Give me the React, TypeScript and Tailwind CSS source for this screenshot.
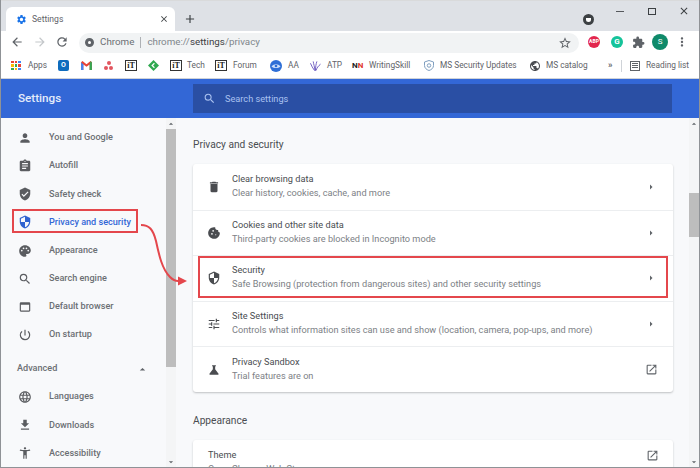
import type { ReactNode } from "react";
import {
  MdAccessibilityNew,
  MdAdd,
  MdArrowBack,
  MdArrowDropDown,
  MdArrowDropUp,
  MdArrowForward,
  MdArrowRight,
  MdAssignment,
  MdClose,
  MdCookie,
  MdDelete,
  MdExtension,
  MdFileDownload,
  MdLanguage,
  MdMoreVert,
  MdOpenInNew,
  MdPalette,
  MdPerson,
  MdPowerSettingsNew,
  MdPublic,
  MdRefresh,
  MdScience,
  MdSearch,
  MdSecurity,
  MdSettings,
  MdStarBorder,
  MdTune,
  MdVerifiedUser,
  MdWebAsset,
} from "react-icons/md";

const sideItems = [
  { label: "You and Google", icon: <MdPerson /> },
  { label: "Autofill", icon: <MdAssignment /> },
  { label: "Safety check", icon: <MdVerifiedUser /> },
  { label: "Privacy and security", icon: <MdSecurity />, active: true },
  { label: "Appearance", icon: <MdPalette /> },
  { label: "Search engine", icon: <MdSearch /> },
  { label: "Default browser", icon: <MdWebAsset /> },
  { label: "On startup", icon: <MdPowerSettingsNew /> },
];

const advancedItems = [
  { label: "Languages", icon: <MdLanguage /> },
  { label: "Downloads", icon: <MdFileDownload /> },
  { label: "Accessibility", icon: <MdAccessibilityNew /> },
];

const rows = [
  { title: "Clear browsing data", sub: "Clear history, cookies, cache, and more", icon: <MdDelete /> },
  { title: "Cookies and other site data", sub: "Third-party cookies are blocked in Incognito mode", icon: <MdCookie /> },
  { title: "Security", sub: "Safe Browsing (protection from dangerous sites) and other security settings", icon: <MdSecurity /> },
  { title: "Site Settings", sub: "Controls what information sites can use and show (location, camera, pop-ups, and more)", icon: <MdTune /> },
  { title: "Privacy Sandbox", sub: "Trial features are on", icon: <MdScience />, external: true },
];

const IT = () => (
  <span className="w-[12px] h-[11px] shrink-0 border border-[#333] flex items-center justify-center text-[8px] leading-none font-bold text-[#222] font-['Liberation_Serif',serif]">
    iT
  </span>
);

const Label = ({ children, className }: { children: ReactNode; className: string }) => (
  <span className={`text-[8.3px] text-[#5f6368] whitespace-nowrap shrink-0 ${className}`}>{children}</span>
);

const Bookmarks = () => (
  <div className="h-[26px] bg-white flex items-center pl-[10px] border-b border-[#cfd3d8]">
    <span className="grid grid-cols-3 gap-[1px] w-[10px] shrink-0">
      {["bg-[#ea4335]", "bg-[#ea4335]", "bg-[#4285f4]", "bg-[#fbbc05]", "bg-[#34a853]", "bg-[#ea4335]", "bg-[#34a853]", "bg-[#fbbc05]", "bg-[#4285f4]"].map((c, i) => (
        <span key={i} className={`h-[2.3px] ${c}`} />
      ))}
    </span>
    <Label className="ml-[7px] w-[18px]">Apps</Label>
    <span className="ml-[12px] w-[11px] h-[11px] shrink-0 rounded-[2px] bg-[#0f6cbd] text-white text-[7px] font-bold flex items-center justify-center">O</span>
    <svg viewBox="0 0 12 10" className="ml-[12px] w-[11px] h-[9px] shrink-0">
      <path d="M0 1.5V10h2.5V4L6 6.5 9.5 4v6H12V1.5L10.500 0 6 3.500 1.500 0z" fill="#ea4335" />
      <path d="M9.500 4v6H12V1.500L10.500 0z" fill="#34a853" />
      <path d="M0 1.500V10h2.500V4z" fill="#4285f4" />
    </svg>
    <span className="ml-[12px] relative w-[9px] h-[9px] shrink-0">
      <span className="absolute left-[2.5px] top-0 w-[4px] h-[4px] rounded-full bg-[#e2555f]" />
      <span className="absolute left-0 top-[5px] w-[4px] h-[4px] rounded-full bg-[#e2555f]" />
      <span className="absolute left-[5px] top-[5px] w-[4px] h-[4px] rounded-full bg-[#e2555f]" />
    </span>
    <span className="ml-[12px] shrink-0"><IT /></span>
    <svg viewBox="0 0 12 12" className="ml-[11px] w-[11px] h-[11px] shrink-0">
      <path d="M6 0l6 6-6 6-6-6z" fill="#2fa84f" />
      <path d="M7 3.500 4.500 6 7 8.500" fill="none" stroke="#fff" strokeWidth="1.300" />
    </svg>
    <span className="ml-[11px] shrink-0"><IT /></span>
    <Label className="ml-[5px] w-[17px]">Tech</Label>
    <span className="ml-[11px] shrink-0"><IT /></span>
    <Label className="ml-[6px] w-[23px]">Forum</Label>
    <svg viewBox="0 0 12 12" className="ml-[14px] w-[12px] h-[12px] shrink-0">
      <circle cx="6" cy="6" r="6" fill="#2f6fd6" />
      <path d="M1.500 6.500C4 3.500 8 3.500 10.500 6.500 8 8.500 4 8.500 1.500 6.500z" fill="#cfe0fa" />
      <circle cx="6" cy="6" r="1.300" fill="#2f6fd6" />
    </svg>
    <Label className="ml-[6px] w-[10px]">AA</Label>
    <svg viewBox="0 0 12 12" className="ml-[12px] w-[11px] h-[12px] shrink-0" fill="none" stroke="#5b47b8" strokeWidth="0.900">
      <path d="M5 11C3 8 1.500 6 .5 3M5.500 11C5 7 4 4 3.500 1M6 11c0-4 .5-7 1.500-10M6.500 11c1-3 2.500-5 5-7" />
    </svg>
    <Label className="ml-[6px] w-[14px]">ATP</Label>
    <span className="ml-[11px] text-[8px] font-bold leading-none whitespace-nowrap w-[11px] shrink-0">
      <span className="text-[#222]">N</span><span className="text-[#e0352b]">N</span>
    </span>
    <Label className="ml-[6px] w-[42px]">WritingSkill</Label>
    <svg viewBox="0 0 24 24" className="ml-[12px] w-[12px] h-[13px] shrink-0" fill="none" stroke="#7f9fc0" strokeWidth="2">
      <path d="M12 2 3 5v7c0 5 4 8.500 9 10 5-1.500 9-5 9-10V5z" />
      <circle cx="12" cy="12" r="3.500" />
    </svg>
    <Label className="ml-[5px] w-[77px]">MS Security Updates</Label>
    <MdPublic className="ml-[12px] text-[12px] text-[#4a4c50] shrink-0" />
    <Label className="ml-[5px] w-[41px]">MS catalog</Label>
    <span className="ml-[21px] w-[5px] text-[9px] font-bold text-[#5f6368] leading-none shrink-0">»</span>
    <span className="ml-[8px] w-px h-[12px] bg-[#cfd3d8] shrink-0" />
    <span className="ml-[8px] w-[10px] h-[10px] border border-[#5f6368] flex flex-col justify-evenly pl-[1px] shrink-0">
      <span className="w-[6px] h-px bg-[#5f6368]" />
      <span className="w-[6px] h-px bg-[#5f6368]" />
      <span className="w-[6px] h-px bg-[#5f6368]" />
    </span>
    <Label className="ml-[6px] w-[43px]">Reading list</Label>
  </div>
);

const Scrollbar = ({ thumbTop, thumbH }: { thumbTop: string; thumbH: string }) => (
  <div className="w-[10px] bg-[#f4f5f6] flex flex-col items-stretch shrink-0">
    <div className="h-[11px] flex items-center justify-center text-[10px] text-[#5f6368]"><MdArrowDropUp /></div>
    <div className={`bg-[#bdbdbd] ${thumbTop} ${thumbH}`} />
    <div className="flex-1" />
    <div className="h-[11px] flex items-center justify-center text-[10px] text-[#5f6368]"><MdArrowDropDown /></div>
  </div>
);

const SideRow = ({ label, icon, active }: { label: string; icon: ReactNode; active?: boolean }) => (
  <div className="h-[28.15px] flex items-center">
    <span className={`w-[48px] shrink-0 flex justify-center text-[14px] ${active ? "text-[#2f63d0]" : "text-[#5a5c60]"}`}>{icon}</span>
    <span className={`text-[9.1px] font-medium ${active ? "text-[#3367d6]" : "text-[#6b6f73]"}`}>{label}</span>
  </div>
);

export default function App() {
  return (
    <div className="relative w-[700px] h-[468px] overflow-hidden flex flex-col bg-[#d9dadb] border-l border-r border-b border-[#8f9296] font-['Roboto',sans-serif]">
      {/* Tabs */}
      <div className="h-[30px] mt-[1px] bg-[#dee1e6] flex items-end pl-[5px] relative">
        <div className="w-[169px] h-[24px] bg-white rounded-t-[6px] flex items-center pl-[10px] pr-[6px]">
          <MdSettings className="text-[#1a73e8] text-[11px]" />
          <span className="ml-[5px] text-[8.6px] text-[#5f6368]">Settings</span>
          <MdClose className="ml-auto text-[#3c4043] text-[10px]" />
        </div>
        <MdAdd className="ml-[8px] mb-[5px] text-[14px] text-[#3c4043]" />
        <div className="ml-auto mb-[6px] mr-[105px] w-[11px] h-[11px] rounded-full bg-[#3c4043] flex items-center justify-center">
          <span className="w-[5px] h-[4px] bg-white rounded-b-full" />
        </div>
        <div className="absolute right-[9px] top-[4px] flex items-center gap-[24px] text-[#3c4043]">
          <span className="w-[8px] h-px bg-[#55585c]" />
          <span className="w-[8px] h-[7px] border border-[#3c4043]" />
          <MdClose className="text-[12px] -ml-[2px]" />
        </div>
      </div>

      {/* Toolbar */}
      <div className="h-[22px] bg-white flex items-center pl-[9px] pr-[8px]">
        <MdArrowBack className="text-[14px] text-[#5f6368]" />
        <MdArrowForward className="ml-[9px] text-[14px] text-[#c4c7ca]" />
        <MdRefresh className="ml-[8px] text-[14px] text-[#5f6368]" />
        <div className="ml-[10px] w-[500px] h-[20px] mt-[1px] rounded-full bg-[#f1f3f4] flex items-center pl-[6px] pr-[6px]">
          <span className="w-[9px] h-[9px] rounded-full bg-[#5f6368] border-[2.5px] border-[#5f6368] flex items-center justify-center">
            <span className="w-[3px] h-[3px] rounded-full bg-white" />
          </span>
          <span className="ml-[6px] text-[9.8px] text-[#6b6f73]">Chrome</span>
          <span className="ml-[6px] w-px h-[11px] bg-[#aeb1b5]" />
          <span className="ml-[6px] text-[9.8px] text-[#80868b]">chrome://<span className="text-[#3c4043]">settings</span>/privacy</span>
          <MdStarBorder className="ml-auto text-[14px] text-[#5f6368] mr-[1px]" />
        </div>
        <span className="ml-[9px] w-[12px] h-[12px] rounded-full bg-[#e2264d] text-white text-[5px] font-bold flex items-center justify-center">ABP</span>
        <span className="ml-[11px] w-[12px] h-[12px] rounded-full bg-[#15c39a] text-white text-[8px] font-bold flex items-center justify-center">G</span>
        <MdExtension className="ml-[9px] text-[13px] text-[#5f6368]" />
        <span className="ml-[7px] w-[16px] h-[16px] rounded-full bg-[#0f8a6a] text-white text-[8px] flex items-center justify-center">S</span>
        <MdMoreVert className="ml-[7px] text-[14px] text-[#5f6368]" />
      </div>

      <Bookmarks />

      {/* Blue header */}
      <div className="h-[39px] bg-[#3367d6] flex items-center pl-[17px] pr-[27px]">
        <span className="w-[175px] text-[11.7px] font-medium text-[#e4ecfb]">Settings</span>
        <div className="flex-1 h-[29px] bg-[#2a4fa4] flex items-center pl-[10px]">
          <MdSearch className="text-[13px] text-[#a9c1f0]" />
          <span className="ml-[9px] text-[9.2px] text-[#a9c1f0]">Search settings</span>
        </div>
      </div>

      {/* Body */}
      <div className="flex-1 min-h-0 flex bg-[#f8f9fb]">
        <div className="w-[165px] shrink-0 pt-[6px]">
          {sideItems.map((item) => (
            <SideRow key={item.label} {...item} />
          ))}
          <div className="mt-[6px] h-[28px] flex items-center pl-[16px] pr-[17px] justify-between">
            <span className="text-[9.1px] font-medium text-[#6b6f73]">Advanced</span>
            <MdArrowDropUp className="text-[13px] text-[#5f6368]" />
          </div>
          {advancedItems.map((item) => (
            <SideRow key={item.label} {...item} />
          ))}
        </div>
        <Scrollbar thumbTop="mt-0" thumbH="h-[238px]" />
        <div className="flex-1 min-w-0 pl-[17px] pr-[16px] overflow-hidden">
          <h2 className="mt-[20px] h-[14px] leading-[14px] text-[10.2px] font-normal text-[#4a4d51]">Privacy and security</h2>
          <div className="mt-[12px] bg-white rounded-[3px] shadow-[0_1px_2px_rgba(60,64,67,0.3)]">
            {rows.map((r, i) => (
              <div key={r.title} className={`h-[45.6px] flex items-center ${i > 0 ? "border-t border-[#eceef0]" : ""}`}>
                <span className="w-[39px] shrink-0 flex justify-center pl-[3px] text-[14px] text-[#4a4c50]">{r.icon}</span>
                <div className="flex-1 min-w-0 -mt-[2px]">
                  <div className="text-[9.2px] leading-[14px] text-[#4a4d51]">{r.title}</div>
                  <div className="text-[9.2px] leading-[14px] text-[#7d8186] whitespace-nowrap">{r.sub}</div>
                </div>
                <span className="w-[44px] flex justify-center text-[#5f6368]">
                  {r.external ? <MdOpenInNew className="text-[13px]" /> : <MdArrowRight className="text-[12px]" />}
                </span>
              </div>
            ))}
          </div>
          <h2 className="mt-[22px] h-[14px] leading-[14px] text-[10.2px] font-normal text-[#4a4d51]">Appearance</h2>
          <div className="mt-[12px] bg-white rounded-t-[3px] shadow-[0_1px_2px_rgba(60,64,67,0.3)] h-[46px] flex pl-[15px] pr-[14px] pt-[8px]">
            <div>
              <div className="text-[9.2px] leading-[14px] text-[#4a4d51]">Theme</div>
              <div className="text-[9.2px] leading-[14px] text-[#7d8186]">Open Chrome Web Store</div>
            </div>
            <MdOpenInNew className="ml-auto mt-[1px] text-[13px] text-[#5f6368]" />
          </div>
        </div>
        <Scrollbar thumbTop="mt-[64px]" thumbH="h-[44px]" />
      </div>

      {/* Annotations */}
      <div className="absolute left-[11px] top-[209px] w-[126px] h-[24px] border-2 border-[#e4474c]" />
      <div className="absolute left-[197px] top-[256px] w-[470px] h-[42px] border-2 border-[#e4474c]" />
      <svg className="absolute left-0 top-0 w-[700px] h-[468px] pointer-events-none" viewBox="0 0 700 468" fill="none">
        <path d="M140 225c8 0 12 4 15 16 3 14 6 28 14 36 3 3 5 4 8 4" stroke="#e4474c" strokeWidth="2" />
        <path d="M186 281l-9-4.500v9z" fill="#e4474c" />
      </svg>
    </div>
  );
}
